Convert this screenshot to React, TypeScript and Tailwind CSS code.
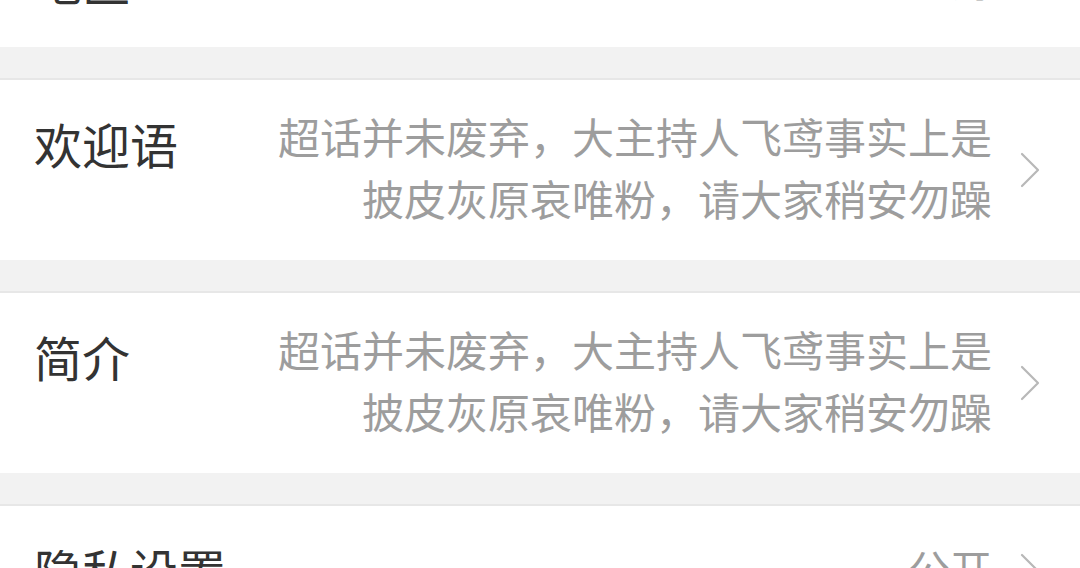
const FONT = { fontFamily: '"Noto Sans CJK SC", "Noto Sans", sans-serif' }

type Row = { label: string; lines: string[] }

const ROWS: Row[][] = [
  [{ label: '地区', lines: ['上海'] }],
  [{ label: '欢迎语', lines: ['超话并未废弃，大主持人飞鸢事实上是', '披皮灰原哀唯粉，请大家稍安勿躁'] }],
  [{ label: '简介', lines: ['超话并未废弃，大主持人飞鸢事实上是', '披皮灰原哀唯粉，请大家稍安勿躁'] }],
  [{ label: '隐私设置', lines: ['公开'] }],
]

function Chevron() {
  return (
    <svg width="22" height="38" viewBox="0 0 22 38" fill="none" className="flex-shrink-0">
      <polyline points="3,3 19,19 3,35" stroke="#b8b8b8" strokeWidth="2.2" strokeLinecap="round" strokeLinejoin="round" />
    </svg>
  )
}

function SettingRow({ row }: { row: Row }) {
  return (
    <div className="flex justify-between min-h-[130px] bg-white pl-[34px] pr-[39px]">
      <span className="pt-[32px] text-[48px] leading-[62px] text-[#333333] whitespace-nowrap">{row.label}</span>
      <div className="flex items-center gap-[27px]">
        <div className="pt-[25px] pb-[31px] text-right text-[42px] leading-[62px] text-[#9d9d9d]">
          {row.lines.map((line) => (
            <div key={line} className="whitespace-nowrap">{line}</div>
          ))}
        </div>
        <Chevron />
      </div>
    </div>
  )
}

export default function App() {
  return (
    <div className="w-[1080px] h-[568px] overflow-hidden bg-white" style={FONT}>
      <div className="-mt-[83px]">
        {ROWS.map((group, i) => (
          <div key={i}>
            {i > 0 && <div className="h-[33px] bg-[#f2f2f2] border-b-2 border-[#e7e7e7]" />}
            {group.map((row) => (
              <SettingRow key={row.label} row={row} />
            ))}
          </div>
        ))}
      </div>
    </div>
  )
}
